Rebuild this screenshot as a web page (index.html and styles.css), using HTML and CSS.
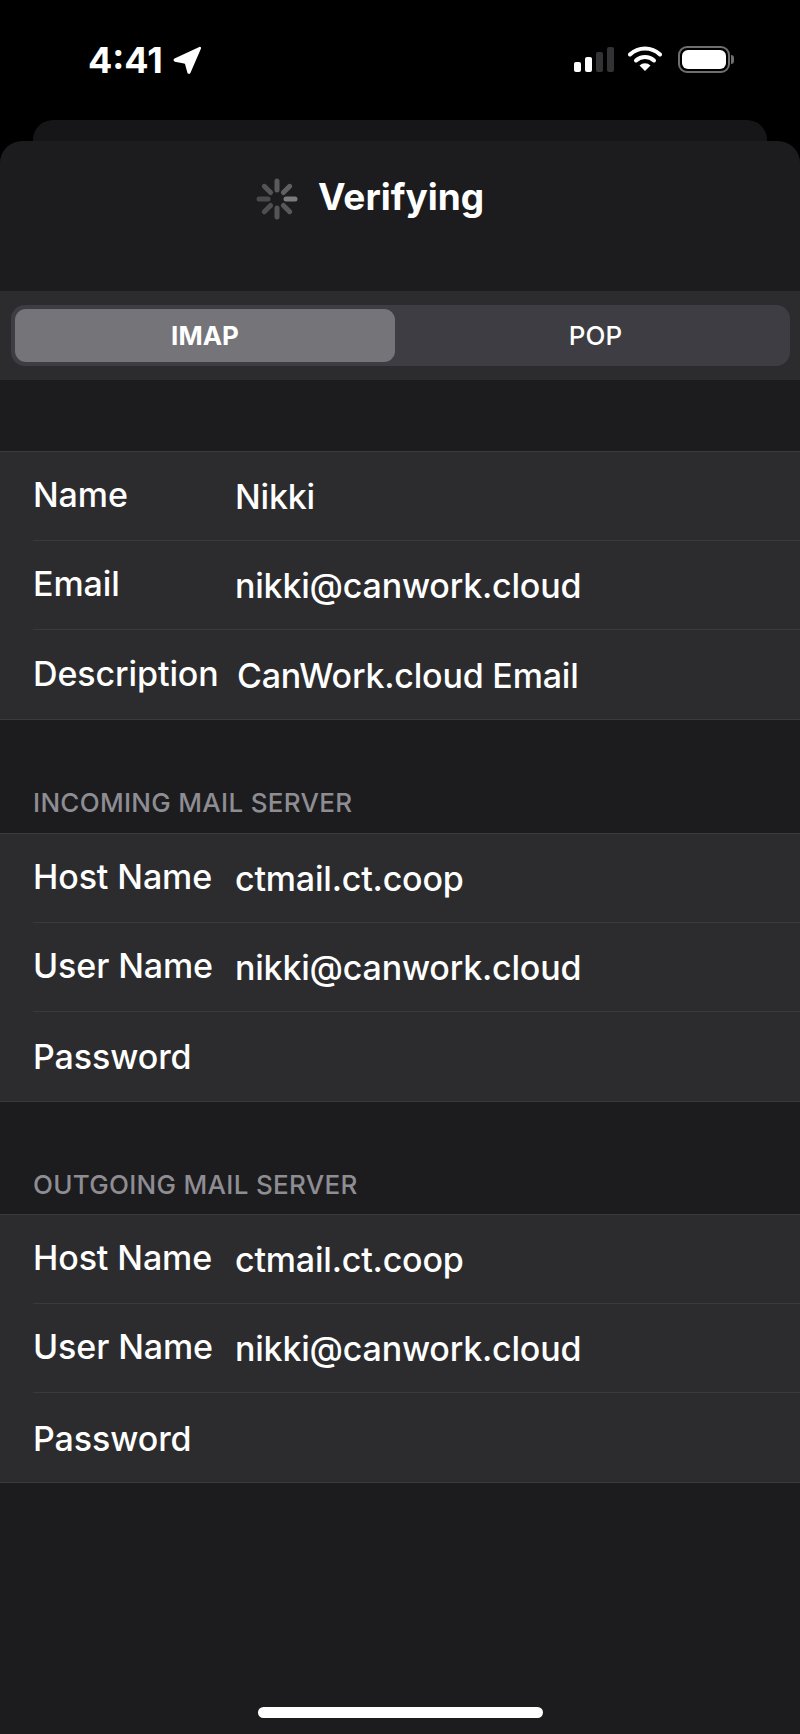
FILE: index.html
```html
<!DOCTYPE html>
<html lang="en">
<head>
<meta charset="utf-8">
<title>Verifying</title>
<link rel="stylesheet" href="styles.css">
</head>
<body>
<div class="screen">
  <header class="status">
    <div class="status-left">
      <span class="time">4:41</span>
      <svg class="loc" width="30" height="30" viewBox="0 0 30 30"><path d="M27.300 1c1.100-.5 2.100.5 1.700 1.600L18.400 27c-.6 1.400-2.500 1.300-3-.2L13.100 18.300c-.1-.5-.5-.8-1-.9L2.900 15.700c-1.600-.3-1.900-2.400-.4-3.100z" fill="#fff"/></svg>
    </div>
    <div class="status-right">
      <div class="signal"><i class="on b1"></i><i class="on b2"></i><i class="b3"></i><i class="b4"></i></div>
      <svg class="wifi" width="34" height="26" viewBox="0 0 34 26"><path d="M2 8.500a21.500 21.500 0 0 1 30 0" fill="none" stroke="#fff" stroke-width="4" stroke-linecap="round"/><path d="M8 14.500a13 13 0 0 1 18 0" fill="none" stroke="#fff" stroke-width="4" stroke-linecap="round"/><path d="M17 25l-5.500-5.500a8 8 0 0 1 11 0z" fill="#fff"/></svg>
      <div class="battery"><div class="battery-body"><div class="battery-fill"></div></div><div class="battery-cap"></div></div>
    </div>
  </header>
  <div class="back-card"></div>
  <main class="sheet">
    <div class="title-bar">
      <svg class="spinner" width="42" height="42" viewBox="0 0 42 42">
        <g stroke-width="5" stroke-linecap="round">
          <line x1="21" y1="3" x2="21" y2="12" stroke="#5a5a5e"/>
          <line x1="33.700" y1="8.300" x2="27.400" y2="14.600" stroke="#606064"/>
          <line x1="39" y1="21" x2="30" y2="21" stroke="#7b7b7f"/>
          <line x1="33.700" y1="33.700" x2="27.400" y2="27.400" stroke="#58585c"/>
          <line x1="21" y1="39" x2="21" y2="30" stroke="#545458"/>
          <line x1="8.300" y1="33.700" x2="14.600" y2="27.400" stroke="#4e4e52"/>
          <line x1="3" y1="21" x2="12" y2="21" stroke="#4a4a4d"/>
          <line x1="8.300" y1="8.300" x2="14.600" y2="14.600" stroke="#545458"/>
        </g>
      </svg>
      <h1 class="title">Verifying</h1>
    </div>
    <div class="segment-band">
      <div class="segment">
        <div class="seg-item seg-active">IMAP</div>
        <div class="seg-item seg-plain">POP</div>
      </div>
    </div>
    <section class="group group-first">
      <div class="row"><span class="label">Name</span><span class="value">Nikki</span></div>
      <div class="row"><span class="label">Email</span><span class="value">nikki@canwork.cloud</span></div>
      <div class="row"><span class="label">Description</span><span class="value value-shift">CanWork.cloud Email</span></div>
    </section>
    <h2 class="group-title">INCOMING MAIL SERVER</h2>
    <section class="group">
      <div class="row"><span class="label">Host Name</span><span class="value">ctmail.ct.coop</span></div>
      <div class="row"><span class="label">User Name</span><span class="value">nikki@canwork.cloud</span></div>
      <div class="row"><span class="label label-low">Password</span></div>
    </section>
    <h2 class="group-title">OUTGOING MAIL SERVER</h2>
    <section class="group">
      <div class="row"><span class="label">Host Name</span><span class="value">ctmail.ct.coop</span></div>
      <div class="row"><span class="label">User Name</span><span class="value">nikki@canwork.cloud</span></div>
      <div class="row"><span class="label label-low">Password</span></div>
    </section>
    <div class="home-wrap"><div class="home-bar"></div></div>
  </main>
</div>
</body>
</html>
```
FILE: styles.css
```css
* { box-sizing: border-box; }
html, body { margin: 0; padding: 0; background: #000; }
body { font-family: Inter, "Liberation Sans", sans-serif; color: #fff; }
.screen { width: 800px; height: 1734px; display: flex; flex-direction: column; overflow: hidden; background: #000; }

.status { height: 120px; flex: none; display: flex; justify-content: space-between; padding: 45px 66px 0 88px; }
.status-left { display: flex; align-items: flex-start; height: 30px; }
.time { font-size: 36px; line-height: 30px; font-weight: 700; margin-right: 9px; }
.loc { display: block; margin-top: 1px; }
.status-right { display: flex; align-items: flex-start; }
.signal { display: flex; align-items: flex-end; gap: 4px; width: 40px; height: 25px; margin-top: 2px; margin-right: 14px; }
.signal i { display: block; width: 7px; border-radius: 2px; background: #333335; }
.signal .on { background: #fff; }
.b1 { height: 10px; }
.b2 { height: 15px; }
.b3 { height: 20px; }
.b4 { height: 25px; }
.wifi { display: block; margin-right: 16px; margin-top: 1px; }
.battery { display: flex; align-items: center; height: 27px; margin-top: 1px; }
.battery-body { width: 52px; height: 27px; border: 2px solid #6f6f6f; border-radius: 9px; padding: 2px; }
.battery-fill { width: 100%; height: 100%; background: #fff; border-radius: 6px; }
.battery-cap { width: 3px; height: 9px; margin-left: 1px; background: #6f6f6f; border-radius: 0 3px 3px 0; }

.back-card { flex: none; height: 21px; margin: 0 33px; background: #161618; border-radius: 20px 20px 0 0; }

.sheet { flex: 1; display: flex; flex-direction: column; background: #1c1c1e; border-radius: 22px 22px 0 0; }
.title-bar { height: 150px; flex: none; display: flex; align-items: flex-start; padding: 36px 0 0 256px; }
.spinner { display: block; flex: none; margin-top: 1px; }
.title { margin: -1px 0 0 20px; font-size: 37px; line-height: 42px; font-weight: 700; }

.segment-band { height: 89px; flex: none; background: #2c2c2e; padding: 14px 10px 14px 11px; }
.segment { height: 61px; display: flex; padding: 4px 0 4px 4px; background: #3e3d43; border-radius: 14px; }
.seg-item { flex: 1; display: flex; align-items: center; justify-content: center; font-size: 26px; font-weight: 700; }
.seg-plain { font-weight: 500; padding-left: 6px; }
.seg-active { flex: none; width: 380px; background: #757479; border-radius: 11px; }

.group { flex: none; background: #2c2c2e; border-top: 1px solid #3a3a3c; border-bottom: 1px solid #3a3a3c; }
.group-first { margin-top: 71px; }
.row { height: 89px; margin-left: 33px; padding-top: 2px; display: flex; align-items: center; border-bottom: 1px solid #3a3a3c; }
.row:last-child { border-bottom: 0; }
.label { width: 202px; flex: none; font-size: 34px; line-height: 40px; font-weight: 450; letter-spacing: -0.1px; padding-bottom: 4px; white-space: nowrap; }
.label-low { padding-bottom: 0; }
.value { font-size: 34px; line-height: 40px; font-weight: 450; letter-spacing: -0.2px; white-space: nowrap; }
.value-shift { margin-left: 2px; }

.group-title { flex: none; margin: 0; height: 112.500px; padding: 68px 0 0 33px; font-size: 26px; line-height: 30px; font-weight: 500; color: #8e8d93; letter-spacing: 0.3px; }

.home-wrap { flex: 1; display: flex; align-items: flex-end; justify-content: center; padding-bottom: 16px; }
.home-bar { width: 285px; height: 11px; background: #fff; border-radius: 6px; }
```
